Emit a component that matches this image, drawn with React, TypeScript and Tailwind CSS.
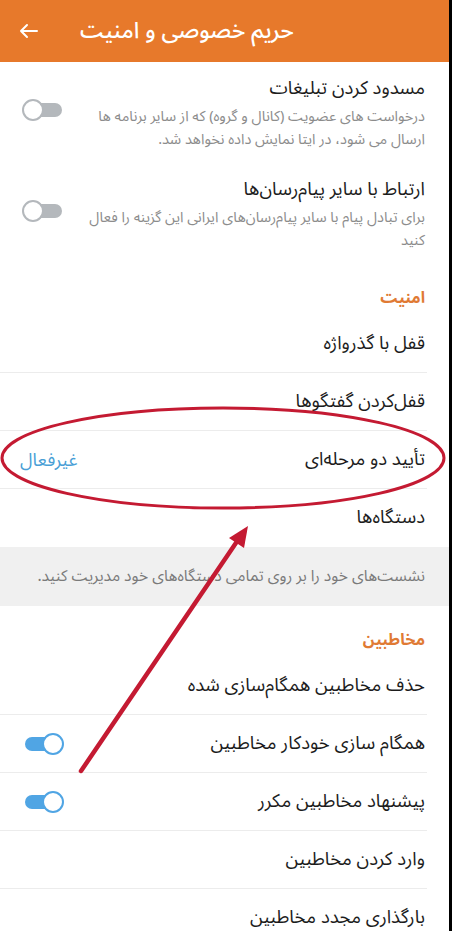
import React from "react";

const font = { fontFamily: '"Noto Sans Arabic", "DejaVu Sans", sans-serif' };

function Toggle({ on }: { on: boolean }) {
  return (
    <div className="relative w-[42px] h-[22px] shrink-0">
      <div
        className={
          "absolute left-[3px] right-[2px] top-[4px] h-[14px] rounded-full " +
          (on ? "bg-[#50a5e4]" : "bg-[#b4b8bc]")
        }
      />
      <div
        className={
          "absolute top-0 w-[22px] h-[22px] rounded-full bg-white border-[2px] " +
          (on ? "right-0 border-[#50a5e4]" : "left-0 border-[#b4b8bc]")
        }
      />
    </div>
  );
}

function ToggleRow({ title, desc }: { title: string; desc: string }) {
  return (
    <div className="flex items-start justify-between pr-[24px] pl-[22px] pt-[14px] pb-[12px]">
      <div className="flex-1">
        <div className="text-[18.5px] leading-[26px] text-[#1c1c1c]">{title}</div>
        <div className="mt-[3px] text-[14.5px] leading-[23px] text-[#8c8c8c]">{desc}</div>
      </div>
      <div className="mt-[23px] mr-[20px]">
        <Toggle on={false} />
      </div>
    </div>
  );
}

function Row({
  title,
  border = true,
  value,
  toggle,
}: {
  title: string;
  border?: boolean;
  value?: string;
  toggle?: boolean;
}) {
  return (
    <div className={"mr-[22px] h-[58px] flex items-center justify-between pr-[2px] pl-[20px] " + (border ? "border-b border-[#ececec]" : "")}>
      <div className="text-[18.5px] leading-[26px] text-[#1c1c1c]">{title}</div>
      {value && <div className="text-[18px] leading-[26px] text-[#4a9fd6]">{value}</div>}
      {toggle !== undefined && (
        <div className="pl-[2px]">
          <Toggle on={toggle} />
        </div>
      )}
    </div>
  );
}

function SectionHeader({ title }: { title: string }) {
  return (
    <div className="pr-[24px] pt-[23px] pb-[6px] text-[16px] leading-[22px] font-bold text-[#e07a34]">
      {title}
    </div>
  );
}

export default function App() {
  return (
    <div className="relative w-[452px] min-h-[931px] h-[931px] overflow-hidden bg-white border-r-[3px] border-black" style={font}>
      <div className="h-[62px] bg-[#e7792b] flex items-center pl-[19px]" dir="ltr">
        <svg width="19" height="16" viewBox="0 0 19 16" fill="none" stroke="white" strokeWidth="2" strokeLinecap="round" strokeLinejoin="round">
          <path d="M18 8H2M8 2L2 8l6 6" />
        </svg>
        <div className="ml-[42px] text-[22.5px] font-medium text-white leading-[30px]" dir="rtl">
          حریم خصوصی و امنیت
        </div>
      </div>

      <div dir="rtl">
        <ToggleRow
          title="مسدود کردن تبلیغات"
          desc="درخواست های عضویت (کانال و گروه) که از سایر برنامه ها ارسال می شود، در ایتا نمایش داده نخواهد شد."
        />
        <ToggleRow
          title="ارتباط با سایر پیام‌رسان‌ها"
          desc="برای تبادل پیام با سایر پیام‌رسان‌های ایرانی این گزینه را فعال کنید"
        />

        <SectionHeader title="امنیت" />
        <Row title="قفل با گذرواژه" />
        <Row title="قفل‌کردن گفتگوها" />
        <Row title="تأیید دو مرحله‌ای" value="غیرفعال" />
        <Row title="دستگاه‌ها" border={false} />

        <div className="h-[59px] bg-[#f0f0f0] flex items-center pr-[24px] text-[15.6px] text-[#7a7a7a]">
          نشست‌های خود را بر روی تمامی دستگاه‌های خود مدیریت کنید.
        </div>

        <SectionHeader title="مخاطبین" />
        <Row title="حذف مخاطبین همگام‌سازی شده" />
        <Row title="همگام سازی خودکار مخاطبین" toggle={true} />
        <Row title="پیشنهاد مخاطبین مکرر" toggle={true} />
        <Row title="وارد کردن مخاطبین" />
        <Row title="بارگذاری مجدد مخاطبین" />
      </div>

      <svg className="absolute left-0 top-0 pointer-events-none" width="452" height="931" viewBox="0 0 452 931">
        <ellipse cx="223" cy="458" rx="221" ry="50" fill="none" stroke="#c41a32" strokeWidth="3" />
        <line x1="81" y1="771" x2="240" y2="537" stroke="#c41a32" strokeWidth="4.5" strokeLinecap="round" />
        <polygon points="248,526 244,548 229,538" fill="#c41a32" />
      </svg>
    </div>
  );
}
